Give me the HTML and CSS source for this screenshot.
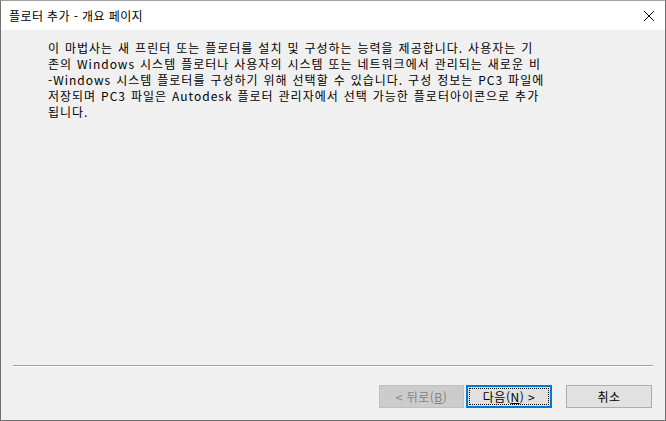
FILE: index.html
```html
<!DOCTYPE html>
<html lang="ko">
<head>
    <meta charset="UTF-8">
    <title>플로터 추가 - 개요 페이지</title>
    <link rel="stylesheet" href="styles.css">
</head>
<body>
    <div class="dialog">
        <div class="titlebar">
            <span class="title">플로터 추가 - 개요 페이지</span>
            <svg class="close" width="12" height="12" viewBox="0 0 12 12">
                <path d="M1 1 L11 11 M11 1 L1 11" stroke="#000" stroke-width="1" fill="none"/>
            </svg>
        </div>
        <div class="content">
            <p class="intro">이 마법사는 새 프린터 또는 플로터를 설치 및 구성하는 능력을 제공합니다. 사용자는 기<br>존의 Windows 시스템 플로터나 사용자의 시스템 또는 네트워크에서 관리되는 새로운 비<br>-Windows 시스템 플로터를 구성하기 위해 선택할 수 있습니다. 구성 정보는 PC3 파일에<br>저장되며 PC3 파일은 Autodesk 플로터 관리자에서 선택 가능한 플로터아이콘으로 추가<br>됩니다.</p>
        </div>
        <div class="footer">
            <hr class="sep">
            <div class="buttons">
                <button class="btn" disabled>&lt; 뒤로(<u>B</u>)</button>
                <button class="btn primary">다음(<u>N</u>) &gt;</button>
                <button class="btn cancel">취소</button>
            </div>
        </div>
    </div>
</body>
</html>
```

FILE: styles.css
```css
html, body {
  margin: 0;
  padding: 0;
}

body {
  font-family: "Noto Sans CJK KR", "Noto Sans", sans-serif;
  font-size: 12px;
  color: #000;
  background: #f0f0f0;
}

.dialog {
  box-sizing: border-box;
  width: 666px;
  height: 421px;
  border: 1px solid #707070;
  border-top-color: #a0a0a0;
  background: #f0f0f0;
  display: flex;
  flex-direction: column;
}

.titlebar {
  height: 29px;
  background: #fff;
  display: flex;
  align-items: center;
  justify-content: space-between;
  padding: 0 10px 0 8px;
}

.title {
  font-size: 12px;
  line-height: 16px;
  letter-spacing: 0.4px;
}

.content {
  flex: 1;
  padding: 10px 0 0 47px;
}

.intro {
  margin: 0;
  line-height: 16px;
  white-space: nowrap;
  letter-spacing: 1px;
  word-spacing: 0.6px;
}

.footer {
  padding: 0 12px 12px 12px;
}

.sep {
  margin: 0;
  border: none;
  border-top: 1px solid #a0a0a0;
  border-bottom: 1px solid #fff;
}

.buttons {
  display: flex;
  justify-content: flex-end;
  margin-top: 18px;
  padding-right: 1px;
}

.btn {
  box-sizing: border-box;
  width: 85px;
  height: 23px;
  margin-left: 2px;
  font-family: inherit;
  font-size: 12px;
  line-height: 16px;
  padding: 0;
  background: #e1e1e1;
  border: 1px solid #adadad;
  color: #000;
  letter-spacing: 0.5px;
}

.btn:disabled {
  background: #cccccc;
  border-color: #bfbfbf;
  color: #838383;
}

.btn.primary {
  width: 86px;
  border: 2px solid #0078d7;
  outline: 1px dotted #000;
  outline-offset: -4px;
}

.btn.cancel {
  width: 86px;
  margin-left: 14px;
}
```
